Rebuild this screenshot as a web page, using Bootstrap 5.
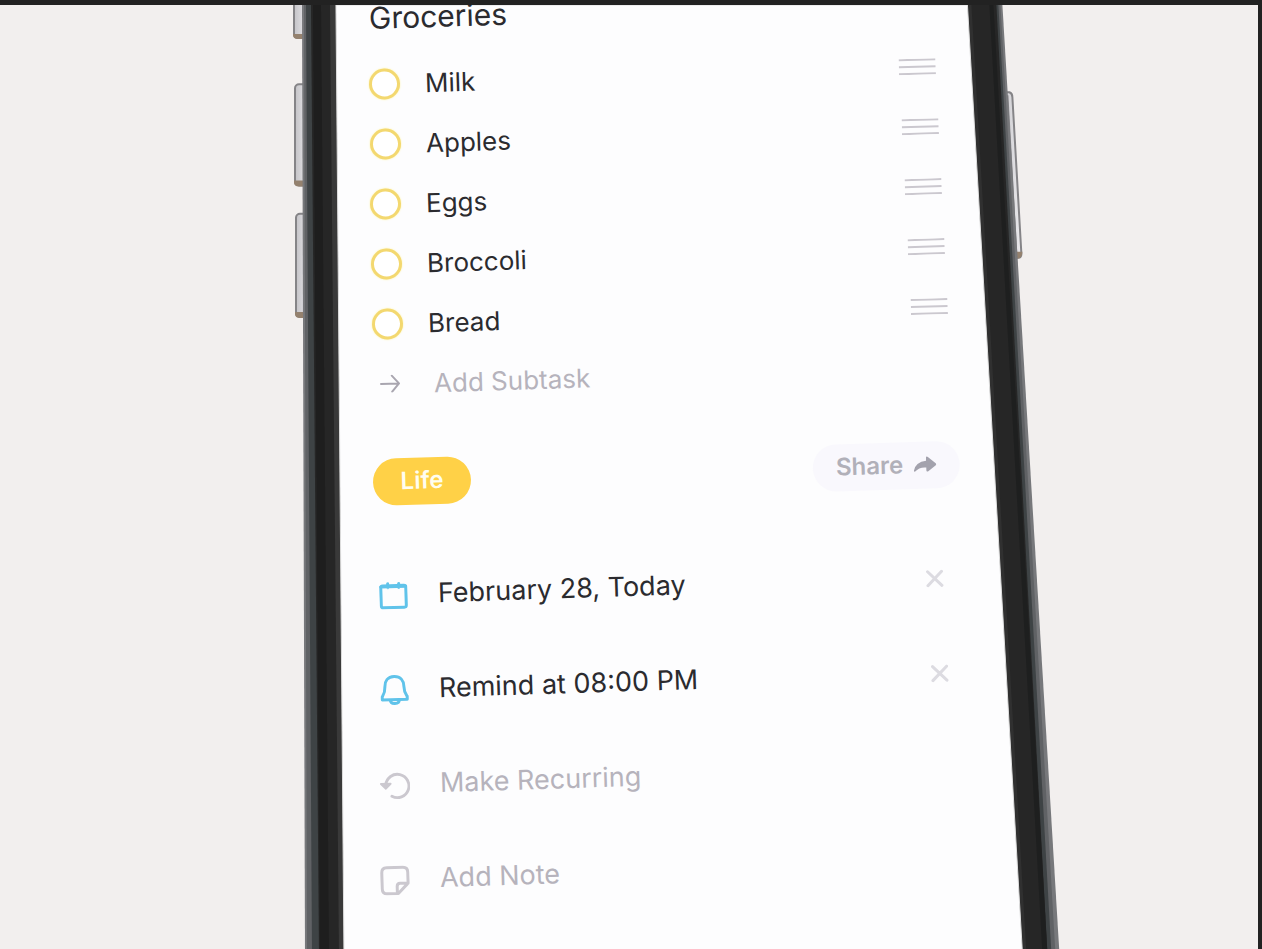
<!DOCTYPE html>
<html lang="en">
<head>
<meta charset="utf-8">
<meta name="viewport" content="width=device-width, initial-scale=1">
<title>Groceries</title>
<link href="https://cdn.jsdelivr.net/npm/bootstrap@5.3.0/dist/css/bootstrap.min.css" rel="stylesheet">
<style>
  body { font-family: Inter, "Liberation Sans", sans-serif; background: #222; color: #2b2b2f; }
  .stage { min-height: 100vh; border-top: 5px solid #222; border-right: 4px solid #222; background: #f2efee; padding-left: 23.2%; }
  .phone { width: 79.5%; min-width: 640px; }
  .phone-art { z-index: 0; }
  .task { z-index: 1; padding: 0 124px 0 76px; }
  /* every line of the tilted screen leans the same way and gets wider further down */
  .tilt { transform: rotate(-1.8deg); transform-origin: left center; margin-left: var(--l, 0px); margin-right: var(--r, 0px); }
  .task-title { font-size: 30px; line-height: 26px; margin-bottom: 23px; font-weight: 400; }
  .sub-row { height: 60px; font-size: 26px; }
  .meta-row { height: 95px; font-size: 27px; }
  .actions-row { height: 48px; margin-top: 44px; margin-bottom: 42px; }
  .form-check-input.ring { width: 31px; height: 31px; margin: 0; border: 3px solid #f3d870; background-color: #fff; box-shadow: 0 0 2px #fff3a0; }
  .gap-text { gap: 25px; }
  .gap-icon { gap: 30px; }
  .gap-arrow { gap: 34px; }
  .gap-share { gap: 11px; }
  .plain { border: 0; background: none; padding: 0; color: inherit; text-align: left; }
  .faded { color: #b6b3bc; }
  .pill { border: 0; height: 47px; font-size: 24px; line-height: 24px; font-weight: 600; }
  .pill-life { background: #ffd147; color: #fffdf0; width: 98px; }
  .pill-share { background: #f9f8fd; color: #b1b0b9; width: 147px; }
  svg { display: block; }
</style>
</head>
<body>
<main class="stage overflow-hidden">
  <div class="phone position-relative">
    <svg class="phone-art position-absolute top-0 start-0 w-100 h-100" viewBox="0 0 768 944" preserveAspectRatio="none" aria-hidden="true">
      <defs>
        <linearGradient id="key"><stop offset="0" stop-color="#c4c3c7"/><stop offset="1" stop-color="#ecebee"/></linearGradient>
      </defs>
      <!-- side keys -->
      <g fill="url(#key)" stroke="#858487" stroke-width="2">
        <rect x="1" y="-10" width="14" height="43" rx="4"/>
        <rect x="2" y="79" width="14" height="101" rx="4"/>
        <rect x="3" y="208" width="14" height="103" rx="4"/>
        <path d="M708 87H717Q720 88 720 92L729 248Q729 252 726 252H716Z"/>
        <path d="M715 90L724 250" fill="none"/>
      </g>
      <g fill="#94816e">
        <path d="M0 29H12V34H5Q0 34 0 30ZM1 175H12V181H6Q1 181 1 177ZM2 306H13V312H7Q2 312 2 308ZM720 246H730Q730 252 725 253H720Z"/>
      </g>
      <!-- body -->
      <polygon points="9,0 710,0 767,944 12,944" fill="#77787b"/>
      <polygon points="11,0 708,0 763,944 14,944" fill="#606265"/>
      <polygon points="13,0 706,0 759,944 19,944" fill="#3e4345"/>
      <polygon points="18,0 704,0 755,944 26,944" fill="#262626"/>
      <polygon points="20,0 28,0 36,944 27,944" fill="#1e1e1e"/>
      <polygon points="37,0 43,0 51,944 46,944" fill="#393939"/>
      <polygon points="697,0 701,0 755,944 750,944" fill="#1e1f1f"/>
      <polygon points="675,0 679,0 734,944 730,944" fill="#303030"/>
      <!-- glass -->
      <polygon points="43,0 675,0 730,944 51,944" fill="#fdfdfe" stroke="#dedede"/>
    </svg>

    <div class="task position-relative">
      <h1 class="task-title tilt">Groceries</h1>

      <ul class="list-unstyled m-0">
        <li class="sub-row tilt d-flex align-items-center justify-content-between" style="--l:0px;--r:0px">
          <span class="d-flex align-items-center gap-text"><input class="form-check-input ring" type="radio" name="t1" id="t1"><label for="t1">Milk</label></span>
          <button class="plain" aria-label="Move Milk"><svg width="37" height="16" viewBox="0 0 37 16" stroke="#cbc8cf" stroke-width="2"><path d="M0 1H37M0 8H37M0 15H37"/></svg></button>
        </li>
        <li class="sub-row tilt d-flex align-items-center justify-content-between" style="--l:1px;--r:-3px">
          <span class="d-flex align-items-center gap-text"><input class="form-check-input ring" type="radio" name="t2" id="t2"><label for="t2">Apples</label></span>
          <button class="plain" aria-label="Move Apples"><svg width="37" height="16" viewBox="0 0 37 16" stroke="#cbc8cf" stroke-width="2"><path d="M0 1H37M0 8H37M0 15H37"/></svg></button>
        </li>
        <li class="sub-row tilt d-flex align-items-center justify-content-between" style="--l:1px;--r:-6px">
          <span class="d-flex align-items-center gap-text"><input class="form-check-input ring" type="radio" name="t3" id="t3"><label for="t3">Eggs</label></span>
          <button class="plain" aria-label="Move Eggs"><svg width="37" height="16" viewBox="0 0 37 16" stroke="#cbc8cf" stroke-width="2"><path d="M0 1H37M0 8H37M0 15H37"/></svg></button>
        </li>
        <li class="sub-row tilt d-flex align-items-center justify-content-between" style="--l:2px;--r:-9px">
          <span class="d-flex align-items-center gap-text"><input class="form-check-input ring" type="radio" name="t4" id="t4"><label for="t4">Broccoli</label></span>
          <button class="plain" aria-label="Move Broccoli"><svg width="37" height="16" viewBox="0 0 37 16" stroke="#cbc8cf" stroke-width="2"><path d="M0 1H37M0 8H37M0 15H37"/></svg></button>
        </li>
        <li class="sub-row tilt d-flex align-items-center justify-content-between" style="--l:3px;--r:-12px">
          <span class="d-flex align-items-center gap-text"><input class="form-check-input ring" type="radio" name="t5" id="t5"><label for="t5">Bread</label></span>
          <button class="plain" aria-label="Move Bread"><svg width="37" height="16" viewBox="0 0 37 16" stroke="#cbc8cf" stroke-width="2"><path d="M0 1H37M0 8H37M0 15H37"/></svg></button>
        </li>
      </ul>

      <div class="sub-row tilt d-flex align-items-center" style="--l:11px">
        <button class="plain faded d-flex align-items-center gap-arrow">
          <svg width="20" height="18" viewBox="0 0 20 18" fill="none" stroke="#a9a6b0" stroke-width="2" stroke-linecap="round" stroke-linejoin="round"><path d="M1 9H19M12 1L19 9L12 17"/></svg>
          Add Subtask
        </button>
      </div>

      <div class="actions-row tilt d-flex align-items-center justify-content-between" style="--l:4px;--r:-24px">
        <button class="pill pill-life rounded-pill">Life</button>
        <button class="pill pill-share rounded-pill d-flex align-items-center justify-content-center gap-share">Share
          <svg width="23" height="18" viewBox="0 0 24 18" fill="#a3a2ad"><path d="M13 2Q13 0 15 1L23 8Q24 9 23 10L15 16Q13 17 13 15V12Q6 11 1 16Q0 16 0 15Q2 6 13 5Z"/></svg>
        </button>
      </div>

      <div class="meta-row tilt d-flex align-items-center justify-content-between" style="--l:10px;--r:-8px">
        <button class="plain d-flex align-items-center gap-icon">
          <svg width="29" height="28" viewBox="0 0 29 28" fill="none" stroke="#60c3ea" stroke-width="3" stroke-linecap="round"><rect x="2" y="4" width="25" height="22" rx="2"/><path d="M2 5H27M9 2V6M20 2V6"/></svg>
          February 28, Today
        </button>
        <button class="plain" aria-label="Clear date"><svg width="18" height="18" viewBox="0 0 18 18" stroke="#dcdbe1" stroke-width="3" stroke-linecap="round"><path d="M2 2L16 16M16 2L2 16"/></svg></button>
      </div>

      <div class="meta-row tilt d-flex align-items-center justify-content-between" style="--l:11px;--r:-13px">
        <button class="plain d-flex align-items-center gap-icon">
          <svg width="29" height="31" viewBox="0 0 29 31" fill="none" stroke="#60c3ea" stroke-width="3" stroke-linejoin="round"><path d="M14.500 2C8 2 5 6.500 5 12C5 18 4 19 2 22V25H27V22C25 19 24 18 24 12C24 6.500 21 2 14.500 2Z"/><path d="M10 25Q10 29 14.500 29Q19 29 19 25"/></svg>
          Remind at 08:00 PM
        </button>
        <button class="plain" aria-label="Clear reminder"><svg width="18" height="18" viewBox="0 0 18 18" stroke="#dcdbe1" stroke-width="3" stroke-linecap="round"><path d="M2 2L16 16M16 2L2 16"/></svg></button>
      </div>

      <div class="meta-row tilt d-flex align-items-center" style="--l:11px">
        <button class="plain faded d-flex align-items-center gap-icon">
          <svg width="30" height="29" viewBox="0 0 31 29" fill="none" stroke="#cbc8cf" stroke-width="3" stroke-linecap="round" stroke-linejoin="round"><path d="M6 14A12 12 0 1 1 12 26"/><path d="M1 13L6 18L11 13Z" fill="#cbc8cf" stroke-width="2"/></svg>
          Make Recurring
        </button>
      </div>

      <div class="meta-row tilt d-flex align-items-center" style="--l:11px">
        <button class="plain faded d-flex align-items-center gap-icon">
          <svg width="30" height="30" viewBox="0 0 30 30" fill="none" stroke="#cbc8cf" stroke-width="3" stroke-linecap="round" stroke-linejoin="round"><path d="M28 18V7Q28 2 23 2H7Q2 2 2 7V23Q2 28 7 28H18L28 18H20Q17 18 17 21V28"/></svg>
          Add Note
        </button>
      </div>
      <div class="pb-4"></div>
    </div>
  </div>
</main>
<script src="https://cdn.jsdelivr.net/npm/bootstrap@5.3.0/dist/js/bootstrap.bundle.min.js"></script>
</body>
</html>
